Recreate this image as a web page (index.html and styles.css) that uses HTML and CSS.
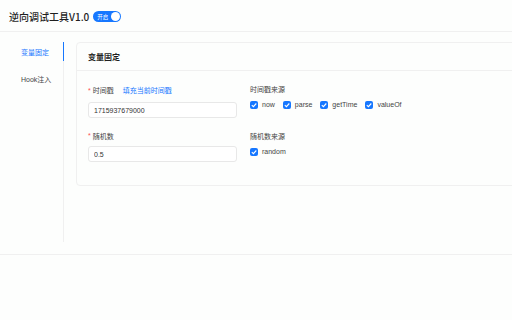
FILE: index.html
```html
<!DOCTYPE html>
<html lang="zh-CN">

<head>
    <meta charset="UTF-8">
    <meta name="viewport" content="width=device-width, initial-scale=1.0">
    <title>逆向调试工具</title>
    <link rel="stylesheet" href="styles.css">
</head>

<body>
    <div class="header">
        <span class="title">逆向调试工具V1.0</span>
        <button class="switch" type="button">
            <span class="switch-text">开启</span>
            <span class="switch-knob"></span>
        </button>
    </div>

    <div class="layout">
        <ul class="menu">
            <li class="menu-item active">变量固定</li>
            <li class="menu-item">Hook注入</li>
        </ul>

        <div class="main">
            <div class="card">
                <div class="card-head">变量固定</div>
                <div class="card-body">
                    <div class="form-grid">
                        <div class="form-item">
                            <div class="form-label tall">
                                <span class="required">*</span>时间戳
                                <a class="link" href="#">填充当前时间戳</a>
                            </div>
                            <input class="input" type="text" value="1715937679000">
                        </div>
                        <div class="form-item">
                            <div class="form-label">时间戳来源</div>
                            <div class="check-group">
                                <label class="check"><span class="box"><svg viewBox="0 0 8 8"><path d="M1.8 4.1 3.4 5.6 6.3 2.5"/></svg></span>now</label>
                                <label class="check"><span class="box"><svg viewBox="0 0 8 8"><path d="M1.8 4.1 3.4 5.6 6.3 2.5"/></svg></span>parse</label>
                                <label class="check"><span class="box"><svg viewBox="0 0 8 8"><path d="M1.8 4.1 3.4 5.6 6.3 2.5"/></svg></span>getTime</label>
                                <label class="check"><span class="box"><svg viewBox="0 0 8 8"><path d="M1.8 4.1 3.4 5.6 6.3 2.5"/></svg></span>valueOf</label>
                            </div>
                        </div>
                        <div class="form-item">
                            <div class="form-label">
                                <span class="required">*</span>随机数
                            </div>
                            <input class="input" type="text" value="0.5">
                        </div>
                        <div class="form-item">
                            <div class="form-label">随机数来源</div>
                            <div class="check-group">
                                <label class="check"><span class="box"><svg viewBox="0 0 8 8"><path d="M1.8 4.1 3.4 5.6 6.3 2.5"/></svg></span>random</label>
                            </div>
                        </div>
                    </div>
                </div>
            </div>
        </div>
    </div>
</body>

</html>
```

FILE: styles.css
```css
body {
    margin: 0;
    font-family: "Liberation Sans", "Noto Sans CJK SC", sans-serif;
    font-size: 7px;
    color: #333;
    background-color: #fdfefd;
    overflow: hidden;
}

.header {
    display: flex;
    align-items: center;
    height: 32px;
    box-sizing: border-box;
    padding: 2px 9px 0;
    border-bottom: 1px solid #f0f0f0;
}

.title {
    font-family: "Noto Sans CJK SC", sans-serif;
    font-size: 10px;
    font-weight: 500;
    color: #1f1f1f;
}

.switch {
    position: relative;
    display: inline-flex;
    align-items: center;
    width: 28px;
    height: 11px;
    margin-left: 4px;
    padding: 0 0 0 4px;
    border: none;
    border-radius: 6px;
    background-color: #1677ff;
    cursor: pointer;
}

.switch-text {
    font-family: "Noto Sans CJK SC", sans-serif;
    font-size: 5.5px;
    color: white;
}

.switch-knob {
    position: absolute;
    top: 1px;
    right: 1px;
    width: 9px;
    height: 9px;
    border-radius: 50%;
    background-color: white;
}

.layout {
    display: flex;
    gap: 12px;
    padding: 10px 0 12px;
    border-bottom: 1px solid #f0f0f0;
}

.menu {
    width: 64px;
    height: 200px;
    box-sizing: border-box;
    margin: 0;
    padding: 0;
    list-style: none;
    border-right: 1px solid #f0f0f0;
}

.menu-item {
    position: relative;
    display: flex;
    align-items: center;
    height: 19px;
    margin-bottom: 8px;
    padding-left: 21px;
    color: #444;
    cursor: pointer;
}

.menu-item.active {
    color: #1677ff;
}

.menu-item.active::after {
    content: '';
    position: absolute;
    top: 0;
    right: -1px;
    width: 1.5px;
    height: 100%;
    background-color: #1677ff;
}

.main {
    flex: 1;
    min-width: 0;
}

.card {
    margin-right: -6px;
    border: 1px solid #f0f0f0;
    border-radius: 4px;
}

.card-head {
    display: flex;
    align-items: center;
    height: 27px;
    padding: 0 11px;
    border-bottom: 1px solid #f0f0f0;
    font-size: 8px;
    font-weight: bold;
    color: #1f1f1f;
}

.card-body {
    padding: 12px 11px 11px;
}

.form-grid {
    display: grid;
    grid-template-columns: 149px auto;
    column-gap: 13px;
    align-items: start;
}

.form-item {
    margin-bottom: 12px;
}

.form-label {
    display: flex;
    align-items: center;
    height: 11px;
    margin-bottom: 5px;
    color: #444;
}

.form-label.tall {
    height: 14px;
}

.required {
    margin-right: 2px;
    color: #ff4d4f;
}

.link {
    margin-left: 9px;
    color: #1677ff;
    text-decoration: none;
}

.input {
    display: block;
    width: 100%;
    height: 16px;
    box-sizing: border-box;
    margin: 0;
    padding: 0 5px;
    border: 1px solid #e8e8e8;
    border-radius: 3px;
    background-color: white;
    font-family: inherit;
    font-size: 7px;
    color: #333;
}

.check-group {
    display: flex;
    align-items: center;
    height: 11px;
}

.check {
    display: inline-flex;
    align-items: center;
    padding-right: 8px;
    color: #444;
    cursor: pointer;
}

.box {
    display: inline-flex;
    width: 8px;
    height: 8px;
    margin-right: 4px;
    border-radius: 2px;
    background-color: #1677ff;
}

.box svg {
    width: 8px;
    height: 8px;
    fill: none;
    stroke: white;
    stroke-width: 1.1;
}
```
